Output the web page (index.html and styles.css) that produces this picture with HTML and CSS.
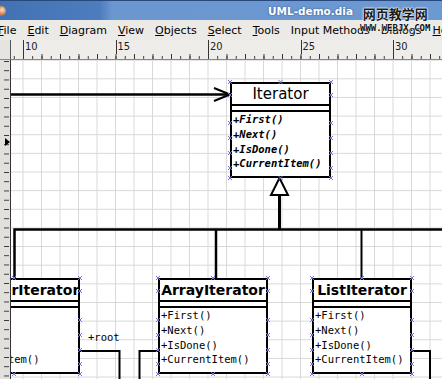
FILE: index.html
```html
<!DOCTYPE html>
<html lang="en">
<head>
    <meta charset="UTF-8">
    <title>UML-demo.dia</title>
    <link rel="stylesheet" href="styles.css">
</head>
<body>
    <div class="window">
        <div class="titlebar">
            <span class="app-icon"></span>
            <span class="title">UML-demo.dia</span>
        </div>

        <nav class="menubar">
            <span><u>F</u>ile</span>
            <span><u>E</u>dit</span>
            <span><u>D</u>iagram</span>
            <span><u>V</u>iew</span>
            <span><u>O</u>bjects</span>
            <span><u>S</u>elect</span>
            <span><u>T</u>ools</span>
            <span>Input Methods</span>
            <span>Dialogs</span>
            <span><u>H</u>elp</span>
        </nav>

        <div class="workspace">
            <div class="ruler-corner"></div>
            <div class="ruler-top">
                <span>10</span>
                <span>15</span>
                <span>20</span>
                <span>25</span>
                <span>30</span>
            </div>
            <div class="ruler-left">
                <span class="pointer"></span>
            </div>

            <div class="canvas">
                <!-- connectors -->
                <svg class="links" width="431" height="319">
                    <g fill="none" stroke="#000">
                        <path d="M0 34.5H217" stroke-width="2.5"/>
                        <path d="M203 28L219 34.5L203 41" stroke-width="2"/>
                        <path d="M268.5 135V169.5" stroke-width="3"/>
                        <path d="M3.5 218V169.5H431" stroke-width="2.5"/>
                        <path d="M205 169.5V218" stroke-width="2.5"/>
                        <path d="M350.5 169.5V218" stroke-width="2"/>
                        <path d="M69 291H108.5V320" stroke-width="2"/>
                        <path d="M128.5 320V291H147" stroke-width="2"/>
                        <path d="M401 291H419V320" stroke-width="2"/>
                        <path d="M268.5 118L260 135H277Z" fill="#fff" stroke-width="2"/>
                    </g>
                </svg>

                <div class="uml-class node-preorder">
                    <div class="uml-name">PreorderIterator</div>
                    <div class="uml-attrs"></div>
                    <div class="uml-ops">
                        <div>+First()</div>
                        <div>+Next()</div>
                        <div>+IsDone()</div>
                        <div>+CurrentItem()</div>
                    </div>
                </div>

                <div class="uml-class abstract node-iterator">
                    <div class="uml-name">Iterator</div>
                    <div class="uml-attrs"></div>
                    <div class="uml-ops">
                        <div>+First()</div>
                        <div>+Next()</div>
                        <div>+IsDone()</div>
                        <div>+CurrentItem()</div>
                    </div>
                </div>

                <div class="uml-class node-array">
                    <div class="uml-name">ArrayIterator</div>
                    <div class="uml-attrs"></div>
                    <div class="uml-ops">
                        <div>+First()</div>
                        <div>+Next()</div>
                        <div>+IsDone()</div>
                        <div>+CurrentItem()</div>
                    </div>
                </div>

                <div class="uml-class node-list">
                    <div class="uml-name">ListIterator</div>
                    <div class="uml-attrs"></div>
                    <div class="uml-ops">
                        <div>+First()</div>
                        <div>+Next()</div>
                        <div>+IsDone()</div>
                        <div>+CurrentItem()</div>
                    </div>
                </div>

                <span class="role-label">+root</span>

                <!-- connection points -->
                <svg class="points" width="431" height="319">
                    <defs>
                        <path id="cp" d="M-2-2l4 4m0-4l-4 4"/>
                    </defs>
                    <g stroke="#7474d8" stroke-width="1" fill="none">
                        <use href="#cp" x="219" y="22"/><use href="#cp" x="269.5" y="22"/><use href="#cp" x="320" y="22"/>
                        <use href="#cp" x="219" y="118"/><use href="#cp" x="269.5" y="118"/><use href="#cp" x="320" y="118"/>
                        <use href="#cp" x="219" y="35"/><use href="#cp" x="320" y="35"/>
                        <use href="#cp" x="219" y="63"/><use href="#cp" x="320" y="63"/>
                        <use href="#cp" x="219" y="78"/><use href="#cp" x="320" y="78"/>
                        <use href="#cp" x="219" y="93"/><use href="#cp" x="320" y="93"/>
                        <use href="#cp" x="219" y="108"/><use href="#cp" x="320" y="108"/>

                        <use href="#cp" x="3" y="218"/><use href="#cp" x="69" y="218"/>
                        <use href="#cp" x="3" y="314"/><use href="#cp" x="69" y="314"/>
                        <use href="#cp" x="69" y="231"/><use href="#cp" x="69" y="260"/>
                        <use href="#cp" x="69" y="275"/><use href="#cp" x="69" y="290"/>
                        <use href="#cp" x="69" y="304"/>

                        <use href="#cp" x="147" y="218"/><use href="#cp" x="202" y="218"/><use href="#cp" x="257" y="218"/>
                        <use href="#cp" x="147" y="314"/><use href="#cp" x="202" y="314"/><use href="#cp" x="257" y="314"/>
                        <use href="#cp" x="147" y="231"/><use href="#cp" x="257" y="231"/>
                        <use href="#cp" x="147" y="260"/><use href="#cp" x="257" y="260"/>
                        <use href="#cp" x="147" y="275"/><use href="#cp" x="257" y="275"/>
                        <use href="#cp" x="147" y="290"/><use href="#cp" x="257" y="290"/>
                        <use href="#cp" x="147" y="304"/><use href="#cp" x="257" y="304"/>

                        <use href="#cp" x="301" y="218"/><use href="#cp" x="351" y="218"/><use href="#cp" x="401" y="218"/>
                        <use href="#cp" x="301" y="314"/><use href="#cp" x="351" y="314"/><use href="#cp" x="401" y="314"/>
                        <use href="#cp" x="301" y="231"/><use href="#cp" x="401" y="231"/>
                        <use href="#cp" x="301" y="260"/><use href="#cp" x="401" y="260"/>
                        <use href="#cp" x="301" y="275"/><use href="#cp" x="401" y="275"/>
                        <use href="#cp" x="301" y="290"/><use href="#cp" x="401" y="290"/>
                        <use href="#cp" x="301" y="304"/><use href="#cp" x="401" y="304"/>
                    </g>
                </svg>
            </div>
        </div>

        <div class="watermark">
            <span class="wm-cn">网页教学网</span>
            <span class="wm-en">WWW.WEBJX.COM</span>
        </div>
    </div>
</body>
</html>
```

FILE: styles.css
```css
* {
    margin: 0;
    padding: 0;
    box-sizing: border-box;
}

body {
    width: 442px;
    height: 379px;
    overflow: hidden;
    font-family: "DejaVu Sans", sans-serif;
    background-color: #eceae6;
    color: #000;
}

.window {
    position: relative;
    width: 442px;
    height: 379px;
    display: flex;
    flex-direction: column;
}

/* title bar */
.titlebar {
    height: 20px;
    display: flex;
    align-items: center;
    border-top: 1px solid #27497c;
    background: linear-gradient(90deg, #4272b3 0, #4d7dbe 100px, #6b97d0 112px, #6d99d2 100%);
    overflow: hidden;
}

.app-icon {
    width: 10px;
    height: 10px;
    margin-left: -4px;
    border-radius: 50%;
    background: radial-gradient(circle at 60% 40%, #f3e6d8 0, #d98a5a 45%, #9c3d1f 100%);
}

.title {
    margin-left: 262px;
    font-size: 10.5px;
    font-weight: bold;
    color: #fff;
    text-shadow: 0 0 2px #2c4f86;
}

/* menu bar */
.menubar {
    height: 20px;
    display: flex;
    align-items: center;
    gap: 11px;
    margin-left: -2px;
    font-size: 11px;
    white-space: nowrap;
    overflow: hidden;
    background-color: #eceae6;
}

/* rulers + canvas */
.workspace {
    flex: 1;
    display: grid;
    grid-template-columns: 11px 1fr;
    grid-template-rows: 20px 1fr;
    min-height: 0;
}

.ruler-corner {
    background-color: #e6e4e0;
    border-right: 1px solid #555;
    border-bottom: 1px solid #888;
}

.ruler-top {
    display: flex;
    padding-left: 12px;
    overflow: hidden;
    border-bottom: 1px solid #888;
    background-color: #efedea;
    background-image:
        linear-gradient(to right, #333 1px, transparent 1px),
        linear-gradient(to right, #333 1px, transparent 1px);
    background-size: 18.5px 5px, 9.25px 3px;
    background-position: 12px 14px, 2.75px 16px;
    background-repeat: repeat-x;
}

.ruler-top span {
    flex: 0 0 92.5px;
    padding: 1px 0 0 1px;
    border-left: 1px solid #333;
    font-family: "DejaVu Sans Condensed", "DejaVu Sans", sans-serif;
    font-size: 11px;
    line-height: 11px;
    color: #222;
    background-color: #efedea;
    background-clip: content-box;
    height: 14px;
}

.ruler-left {
    position: relative;
    border-right: 1px solid #333;
    background-color: #e2e0dc;
    background-image: linear-gradient(to bottom, #333 1px, transparent 1px);
    background-size: 5px 9.25px;
    background-position: 4px 1px;
    background-repeat: repeat-y;
}

.pointer {
    position: absolute;
    top: 78px;
    left: 5px;
    border-left: 5px solid #000;
    border-top: 4px solid transparent;
    border-bottom: 4px solid transparent;
}

.canvas {
    position: relative;
    overflow: hidden;
    background-color: #fff;
    background-image:
        linear-gradient(to right, #d8d8d8 1px, transparent 1px),
        linear-gradient(to bottom, #d8d8d8 1px, transparent 1px);
    background-size: 18.5px 18.65px;
    background-position: 11.5px -0.35px;
}

.links,
.points {
    position: absolute;
    top: 0;
    left: 0;
}

/* uml class boxes */
.uml-class {
    position: absolute;
    height: 96px;
    display: flex;
    flex-direction: column;
    border: 2px solid #000;
    background-color: #fff;
}

.uml-name {
    height: 22px;
    display: flex;
    align-items: center;
    justify-content: center;
    border-bottom: 2px solid #000;
    font-size: 14px;
    font-weight: bold;
    white-space: nowrap;
}

.uml-attrs {
    height: 6px;
    border-bottom: 2px solid #000;
}

.uml-ops {
    flex: 1;
    padding: 0 1px;
    font-family: "DejaVu Sans Mono", monospace;
    font-size: 10.5px;
    line-height: 14.75px;
    white-space: nowrap;
}

.abstract .uml-name {
    font-size: 15px;
    font-weight: normal;
}

.abstract .uml-ops {
    font-weight: bold;
    font-style: italic;
}

.node-iterator {
    left: 219px;
    top: 22px;
    width: 101px;
}

.node-preorder {
    left: -63px;
    top: 218px;
    width: 132px;
}

.node-array {
    left: 147px;
    top: 218px;
    width: 110px;
}

.node-list {
    left: 301px;
    top: 218px;
    width: 100px;
}

.role-label {
    position: absolute;
    left: 77px;
    top: 270px;
    font-family: "DejaVu Sans Mono", monospace;
    font-size: 10.5px;
    line-height: 14px;
}

/* site watermark over the window */
.watermark {
    position: absolute;
    top: 6px;
    left: 360px;
    display: flex;
    flex-direction: column;
    align-items: center;
    pointer-events: none;
}

.wm-cn {
    font-family: "Noto Sans CJK SC", sans-serif;
    font-size: 13px;
    font-weight: bold;
    line-height: 15px;
    color: #1a1a1a;
    text-shadow: 0 0 1px #fff, 0 0 2px #fff, 0 0 2px #fff;
}

.wm-en {
    font-family: "DejaVu Sans Mono", monospace;
    font-size: 9px;
    font-weight: bold;
    line-height: 10px;
    margin-top: 2px;
    color: #111;
    text-shadow: 0 0 1px #fff, 0 0 2px #fff;
}
```
